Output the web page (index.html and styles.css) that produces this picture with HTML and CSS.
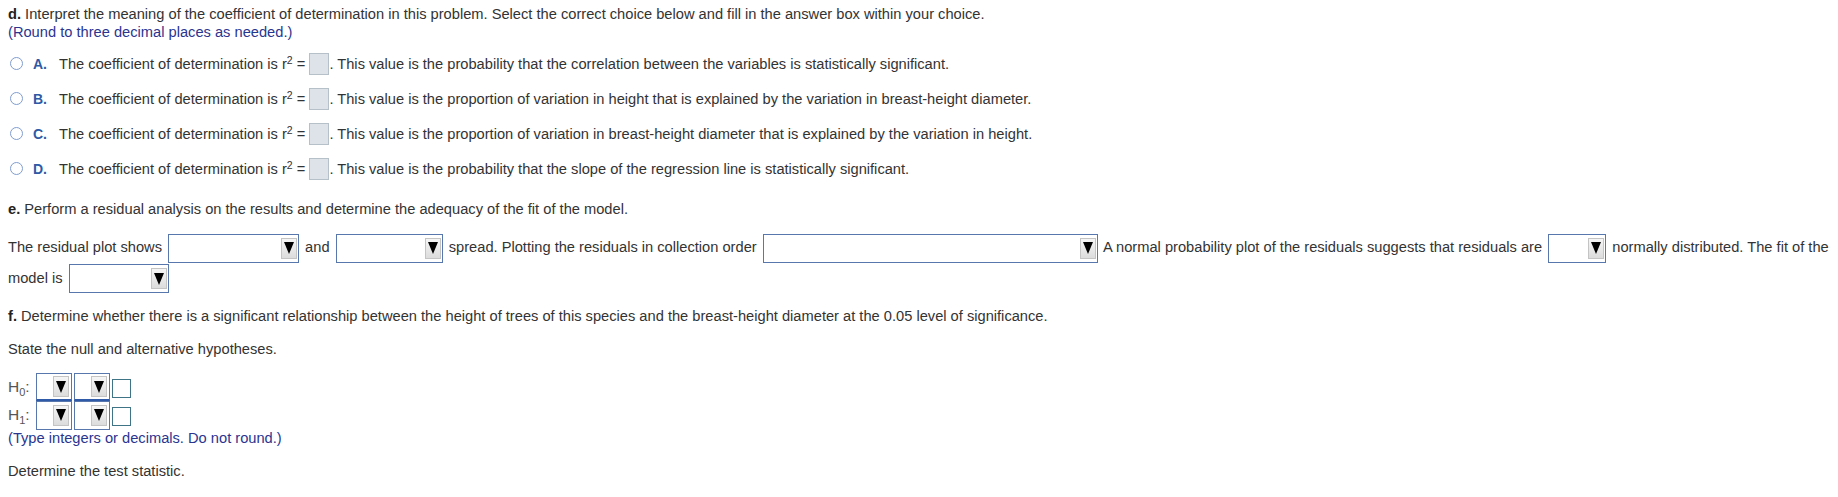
FILE: index.html
```html
<!DOCTYPE html>
<html>
<head>
<meta charset="utf-8">
<link rel="stylesheet" href="styles.css">
</head>
<body>
<div class="page">
  <div class="line"><b>d.</b> Interpret the meaning of the coefficient of determination in this problem. Select the correct choice below and fill in the answer box within your choice.</div>
  <div class="line note">(Round to three decimal places as needed.)</div>

  <div class="options">
    <div class="opt">
      <span class="radio"></span><span class="letter">A.</span>
      <span class="otext">The coefficient of determination is r<sup>2</sup> = <span class="abox"></span>. This value is the probability that the correlation between the variables is statistically significant.</span>
    </div>
    <div class="opt">
      <span class="radio"></span><span class="letter">B.</span>
      <span class="otext">The coefficient of determination is r<sup>2</sup> = <span class="abox"></span>. This value is the proportion of variation in height that is explained by the variation in breast-height diameter.</span>
    </div>
    <div class="opt">
      <span class="radio"></span><span class="letter">C.</span>
      <span class="otext">The coefficient of determination is r<sup>2</sup> = <span class="abox"></span>. This value is the proportion of variation in breast-height diameter that is explained by the variation in height.</span>
    </div>
    <div class="opt">
      <span class="radio"></span><span class="letter">D.</span>
      <span class="otext">The coefficient of determination is r<sup>2</sup> = <span class="abox"></span>. This value is the probability that the slope of the regression line is statistically significant.</span>
    </div>
  </div>

  <div class="line sec-e"><b>e.</b> Perform a residual analysis on the results and determine the adequacy of the fit of the model.</div>

  <div class="resid">The residual plot shows <span class="dd w1"><span class="btn"><span class="tri"></span></span></span> and <span class="dd w2"><span class="btn"><span class="tri"></span></span></span> spread. Plotting the residuals in collection order <span class="dd w3"><span class="btn"><span class="tri"></span></span></span> A normal probability plot of the residuals suggests that residuals are <span class="dd w4"><span class="btn"><span class="tri"></span></span></span> normally distributed. The fit of the<br>model is <span class="dd w5"><span class="btn"><span class="tri"></span></span></span></div>

  <div class="line sec-f"><b>f.</b> Determine whether there is a significant relationship between the height of trees of this species and the breast-height diameter at the 0.05 level of significance.</div>
  <div class="line gap">State the null and alternative hypotheses.</div>

  <div class="hyp">
    <div class="hrow top">
      <span class="hlab">H<sub>0</sub>:</span>
      <span class="hdd"><span class="btn"><span class="tri"></span></span></span>
      <span class="hdd"><span class="btn"><span class="tri"></span></span></span>
      <span class="sbox"></span>
    </div>
    <div class="hrow bot">
      <span class="hlab">H<sub>1</sub>:</span>
      <span class="hdd"><span class="btn"><span class="tri"></span></span></span>
      <span class="hdd"><span class="btn"><span class="tri"></span></span></span>
      <span class="sbox"></span>
    </div>
  </div>
  <div class="line note">(Type integers or decimals. Do not round.)</div>
  <div class="line gap">Determine the test statistic.</div>
</div>
</body>
</html>
```

FILE: styles.css
```css
html, body {
  margin: 0;
  padding: 0;
  background: #ffffff;
}

body {
  font-family: "Liberation Sans", Arial, sans-serif;
  font-size: 14.67px;
  color: #333333;
}

.page {
  padding: 5px 0 0 8px;
  display: flex;
  flex-direction: column;
}

.line {
  height: 18px;
  line-height: 18px;
  white-space: nowrap;
}

.line b {
  color: #222;
}

.note {
  color: #2a3590;
}

.options {
  margin-top: 5px;
  display: flex;
  flex-direction: column;
}

.opt {
  height: 35px;
  display: flex;
  align-items: center;
  white-space: nowrap;
}

.radio {
  width: 11px;
  height: 11px;
  border: 1.5px solid #7f9dcf;
  border-radius: 50%;
  margin-left: 2px;
  background: #fff;
  flex: none;
}

.letter {
  width: 26px;
  margin-left: 10px;
  font-weight: bold;
  color: #2d5aa6;
  font-size: 14px;
}

.otext {
  line-height: 22px;
}

sup {
  font-size: 10.5px;
  vertical-align: 5px;
  line-height: 0;
}

.abox {
  display: inline-block;
  width: 18px;
  height: 20px;
  background: #dde3e8;
  border: 1px solid #b5c0c9;
  vertical-align: -6px;
}

.sec-e {
  margin-top: 14px;
}

.resid {
  margin-top: 14px;
  line-height: 30px;
  white-space: nowrap;
}

.dd {
  display: inline-flex;
  justify-content: flex-end;
  align-items: center;
  box-sizing: border-box;
  height: 29px;
  padding: 3px 1px;
  margin: 0 2px;
  border: 1px solid #5877ad;
  background: #fff;
  vertical-align: middle;
}

.w1 { width: 131px; }
.w2 { width: 107px; }
.w3 { width: 335px; }
.w4 { width: 58px; }
.w5 { width: 100px; }

.btn {
  display: flex;
  align-items: center;
  justify-content: center;
  width: 16px;
  height: 21px;
  box-sizing: border-box;
  border: 1px solid #c4c4c4;
  background: linear-gradient(#f6f6f6, #dcdcdc);
}

.tri {
  width: 0;
  height: 0;
  border-left: 5px solid transparent;
  border-right: 5px solid transparent;
  border-top: 12px solid #000;
}

.sec-f {
  margin-top: 14px;
}

.gap {
  margin-top: 15px;
}

.hyp {
  margin-top: 15px;
  display: flex;
  flex-direction: column;
}

.hrow {
  display: flex;
  align-items: center;
  height: 28px;
}

.hlab {
  width: 28px;
  color: #555;
  font-size: 15.5px;
}

sub {
  font-size: 11px;
  vertical-align: -4px;
  line-height: 0;
}

.hdd {
  display: flex;
  justify-content: flex-end;
  align-items: center;
  box-sizing: border-box;
  width: 36px;
  height: 28px;
  padding: 0 2px;
  border: 1px solid #5877ad;
  margin-right: 2px;
  background: #fff;
}

.top .hdd {
  border-bottom: 2px solid #2f5aa8;
}

.bot .hdd {
  height: 29px;
}

.sbox {
  display: block;
  width: 19px;
  height: 19px;
  box-sizing: border-box;
  border: 1px solid #3f7486;
  margin-top: 2px;
}
```
